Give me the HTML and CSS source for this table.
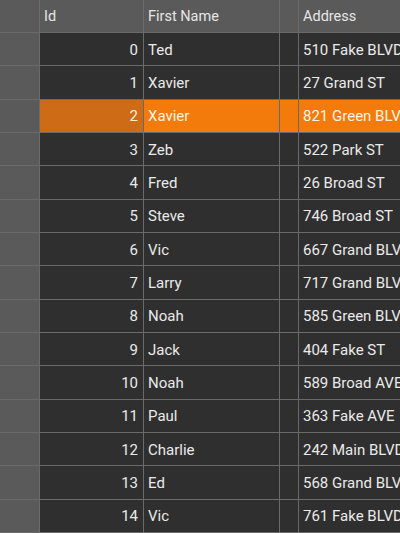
FILE: index.html
```html
<!DOCTYPE html>
<html>
<head>
<meta charset="utf-8">
<link rel="stylesheet" href="styles.css">
</head>
<body>
<div class="grid">
  <div class="hdr corner"></div>
  <div class="hdr">Id</div>
  <div class="hdr">First Name</div>
  <div class="hdr"></div>
  <div class="hdr">Address</div>

  <div class="rh"></div><div class="c num">0</div><div class="c">Ted</div><div class="c"></div><div class="c">510 Fake BLVD</div>
  <div class="rh"></div><div class="c num">1</div><div class="c">Xavier</div><div class="c"></div><div class="c">27 Grand ST</div>
  <div class="rh"></div><div class="c num sel-id">2</div><div class="c sel">Xavier</div><div class="c sel"></div><div class="c sel">821 Green BLVD</div>
  <div class="rh"></div><div class="c num">3</div><div class="c">Zeb</div><div class="c"></div><div class="c">522 Park ST</div>
  <div class="rh"></div><div class="c num">4</div><div class="c">Fred</div><div class="c"></div><div class="c">26 Broad ST</div>
  <div class="rh"></div><div class="c num">5</div><div class="c">Steve</div><div class="c"></div><div class="c">746 Broad ST</div>
  <div class="rh"></div><div class="c num">6</div><div class="c">Vic</div><div class="c"></div><div class="c">667 Grand BLVD</div>
  <div class="rh"></div><div class="c num">7</div><div class="c">Larry</div><div class="c"></div><div class="c">717 Grand BLVD</div>
  <div class="rh"></div><div class="c num">8</div><div class="c">Noah</div><div class="c"></div><div class="c">585 Green BLVD</div>
  <div class="rh"></div><div class="c num">9</div><div class="c">Jack</div><div class="c"></div><div class="c">404 Fake ST</div>
  <div class="rh"></div><div class="c num">10</div><div class="c">Noah</div><div class="c"></div><div class="c">589 Broad AVE</div>
  <div class="rh"></div><div class="c num">11</div><div class="c">Paul</div><div class="c"></div><div class="c">363 Fake AVE</div>
  <div class="rh"></div><div class="c num">12</div><div class="c">Charlie</div><div class="c"></div><div class="c">242 Main BLVD</div>
  <div class="rh"></div><div class="c num">13</div><div class="c">Ed</div><div class="c"></div><div class="c">568 Grand BLVD</div>
  <div class="rh"></div><div class="c num">14</div><div class="c">Vic</div><div class="c"></div><div class="c">761 Fake BLVD</div>
</div>
</body>
</html>
```
FILE: styles.css
```css
html, body {
  margin: 0;
  padding: 0;
  width: 400px;
  height: 533px;
  overflow: hidden;
  background: #6a6a6a;
}
.grid {
  display: grid;
  grid-template-columns: 39px 103px 135px 18px 150px;
  grid-template-rows: 32px repeat(15, 32.333px);
  gap: 1px;
  background: #6a6a6a;
  font-family: Roboto, "Liberation Sans", sans-serif;
  font-size: 15px;
  width: 450px;
}
.hdr {
  background: #5a5a5a;
  color: #e6e6e6;
  font-size: 14.5px;
  display: flex;
  align-items: center;
  padding: 1px 4px 0;
  white-space: nowrap;
  overflow: hidden;
}
.rh {
  background: #5a5a5a;
}
.c {
  background: #2f2f2f;
  color: #eaeaea;
  display: flex;
  align-items: center;
  padding: 1px 4px 0;
  white-space: nowrap;
  overflow: hidden;
}
.num {
  justify-content: flex-end;
  padding-right: 5px;
}
.sel {
  background: #f27b0b;
  color: #fff3e6;
}
.sel-id {
  background: #cd6b16;
  color: #fff0e0;
}
```
